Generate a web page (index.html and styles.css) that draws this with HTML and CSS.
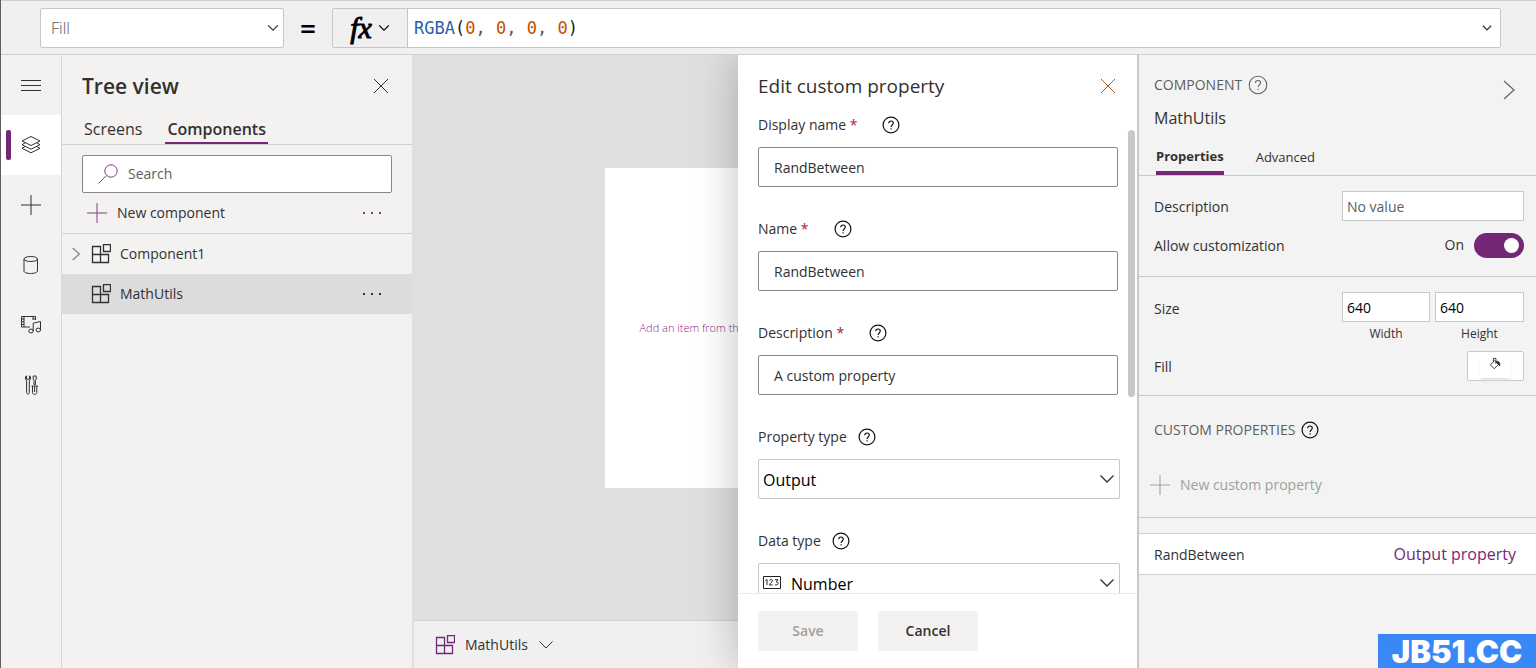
FILE: index.html
```html
<!DOCTYPE html>
<html lang="en">
<head>
<meta charset="utf-8">
<title>Component editor</title>
<link rel="stylesheet" href="styles.css">
</head>
<body>
<svg class="defs" aria-hidden="true">
  <symbol id="chevron" viewBox="0 0 16 16"><path d="M1.500 4.500 8 11l6.500-6.500"/></symbol>
  <symbol id="chevron-right" viewBox="0 0 12 20"><path d="M1 1l10 9-10 9"/></symbol>
  <symbol id="close" viewBox="0 0 16 16"><path d="M1 1l14 14M15 1 1 15"/></symbol>
  <symbol id="plus" viewBox="0 0 20 20"><path d="M10 0v20M0 10h20"/></symbol>
  <symbol id="help" viewBox="0 0 18 18"><circle cx="9" cy="9" r="7.900"/><path d="M6.700 7.200C6.700 5.800 7.600 5 9 5s2.300.8 2.300 2.100c0 1.700-2.200 2-2.200 3.800M9.100 12.300v1.300"/></symbol>
  <symbol id="dots" viewBox="0 0 20 4"><path d="M1 1h2v2H1zM9 1h2v2H9zM17 1h2v2h-2z"/></symbol>
  <symbol id="component" viewBox="0 0 20 20"><path d="M1.500 2.500h8v8h-8zM1.500 10.500h8v8h-8zM9.500 10.500h8v8h-8zM12.500.5h7v7h-7z"/></symbol>
</svg>

<header class="formula-bar">
  <div class="select-wrap property-select">
    <select aria-label="Property"><option>Fill</option></select>
    <svg class="icon chevron"><use href="#chevron"/></svg>
  </div>
  <span class="equals">=</span>
  <div class="formula">
    <button class="fx" aria-label="Functions"><i>fx</i><svg class="icon chevron"><use href="#chevron"/></svg></button>
    <div class="code" role="textbox" aria-label="Formula"><code><span class="fn">RGBA</span>(<span class="num">0</span><span class="sep">,</span> <span class="num">0</span><span class="sep">,</span> <span class="num">0</span><span class="sep">,</span> <span class="num">0</span>)</code>
      <svg class="icon chevron small"><use href="#chevron"/></svg>
    </div>
  </div>
</header>

<div class="workspace">
  <nav class="rail" aria-label="Tools">
    <button aria-label="Menu"><svg class="icon s20 crisp" viewBox="0 0 20 20"><path d="M0 5.500h20M0 10.500h20M0 15.500h20"/></svg></button>
    <button class="active" aria-label="Tree view"><svg class="icon s20" viewBox="0 0 20 20"><path d="M10 1.500 1 6l9 4.500L19 6zM4.300 7.800 1 9.700l9 4.500 9-4.500-3.300-1.900M4.300 11.500 1 13.300l9 4.500 9-4.500-3.300-1.800"/></svg></button>
    <button aria-label="Insert"><svg class="icon s20"><use href="#plus"/></svg></button>
    <button aria-label="Data"><svg class="icon s20" viewBox="0 0 20 20"><path d="M3 4v12c0 1.500 3 2.500 6.500 2.500s7-1 7-2.500V4"/><ellipse cx="9.750" cy="4" rx="6.750" ry="2.500"/></svg></button>
    <button aria-label="Media"><svg class="icon s20" viewBox="0 0 20 20"><path d="M9 12H.5V1.500H14.500V5M3 1.500v10.500M12 1.500V5M.5 4H3M.5 6.700H3M.5 9.400H3M12 4h2.500M12.200 16V8.200L19.500 6.500v8.500"/><ellipse cx="10" cy="16" rx="2.200" ry="1.900"/><ellipse cx="17.300" cy="15" rx="2.200" ry="1.900"/></svg></button>
    <button aria-label="Advanced tools"><svg class="icon s20" viewBox="0 0 20 20"><path d="M5.500.8v3.400h3V.8c1.400.7 1.600 3.700-.2 5V17.500c0 2-2.700 2-2.700 0V5.800C3.900 4.500 4.100 1.500 5.500.8zM12.200 1h3v3l-.8 1.500v4h-1.400v-4L12.200 4zM10.500 11h6.500M11.500 11v6.500c0 2.500 4.300 2.500 4.300 0V11M13.600 11v6"/></svg></button>
  </nav>

  <aside class="tree">
    <div class="tree-head">
      <h1>Tree view</h1>
      <button class="plain" aria-label="Close"><svg class="icon s16"><use href="#close"/></svg></button>
    </div>
    <div class="tree-tabs"><button>Screens</button><button class="selected">Components</button></div>
    <label class="search">
      <svg class="icon s20 purple" viewBox="0 0 20 20"><circle cx="13" cy="7" r="6.200"/><path d="M8.500 11.500.5 19.500"/></svg>
      <input type="search" placeholder="Search" aria-label="Search">
    </label>
    <div class="new-row">
      <button class="plain new-component"><svg class="icon s20 purple"><use href="#plus"/></svg>New component</button>
      <button class="plain" aria-label="More"><svg class="dots purple"><use href="#dots"/></svg></button>
    </div>
    <ul class="items">
      <li><svg class="icon expander"><use href="#chevron-right"/></svg><svg class="icon s20 component"><use href="#component"/></svg><span>Component1</span></li>
      <li class="current"><svg class="icon s20 component"><use href="#component"/></svg><span>MathUtils</span><button class="plain" aria-label="More"><svg class="dots"><use href="#dots"/></svg></button></li>
    </ul>
  </aside>

  <main class="stage">
    <div class="canvas"><div class="artboard">Add an item from th</div></div>
    <div class="breadcrumb"><svg class="icon s20 component dark"><use href="#component"/></svg><span>MathUtils</span><svg class="icon chevron"><use href="#chevron"/></svg></div>

    <section class="editor" aria-labelledby="editor-title">
      <div class="editor-head">
        <h2 id="editor-title">Edit custom property</h2>
        <button class="plain close" aria-label="Close"><svg class="icon s16"><use href="#close"/></svg></button>
      </div>
      <form class="fields">
        <div class="field"><div class="label"><label for="display">Display name <b>*</b></label><button type="button" class="plain" aria-label="Help"><svg class="icon help"><use href="#help"/></svg></button></div>
          <input id="display" type="text" value="RandBetween"></div>
        <div class="field"><div class="label"><label for="name">Name <b>*</b></label><button type="button" class="plain" aria-label="Help"><svg class="icon help"><use href="#help"/></svg></button></div>
          <input id="name" type="text" value="RandBetween"></div>
        <div class="field"><div class="label"><label for="desc">Description <b>*</b></label><button type="button" class="plain" aria-label="Help"><svg class="icon help"><use href="#help"/></svg></button></div>
          <input id="desc" type="text" value="A custom property"></div>
        <div class="field wide"><div class="label near"><label for="ptype">Property type</label><button type="button" class="plain" aria-label="Help"><svg class="icon help"><use href="#help"/></svg></button></div>
          <div class="select-wrap"><select id="ptype"><option>Output</option></select><svg class="icon chevron"><use href="#chevron"/></svg></div></div>
        <div class="field wide"><div class="label near"><label for="dtype">Data type</label><button type="button" class="plain" aria-label="Help"><svg class="icon help"><use href="#help"/></svg></button></div>
          <div class="select-wrap typed"><svg class="type-icon" viewBox="0 0 18 13" aria-hidden="true"><path class="frame" d="M.5.5h17v12H.5z"/><path d="M2.500 4.500 4 3.500v5.500M6.500 4.500c.5-1.300 3-1.300 3 .3 0 1.200-3 2.500-3 4.200h3.200M12 3.700h3L13.300 6c2.700 0 2.200 3-.1 3-.7 0-1.200-.2-1.400-.6"/></svg><select id="dtype"><option>Number</option></select><svg class="icon chevron"><use href="#chevron"/></svg></div></div>
      </form>
      <div class="thumb"></div>
      <div class="editor-foot"><button disabled>Save</button><button>Cancel</button></div>
    </section>
  </main>

  <aside class="props">
    <div class="props-head">
      <div>
        <div class="kind">COMPONENT<button class="plain" aria-label="Help"><svg class="icon help large"><use href="#help"/></svg></button></div>
        <div class="component-name">MathUtils</div>
      </div>
      <button class="plain collapse" aria-label="Collapse"><svg class="icon"><use href="#chevron-right"/></svg></button>
    </div>
    <div class="props-tabs"><button class="selected">Properties</button><button>Advanced</button></div>
    <div class="group">
      <div class="row"><label for="pdesc">Description</label><input id="pdesc" type="text" placeholder="No value"></div>
      <div class="row toggle-row"><label for="allow">Allow customization</label><span class="toggle"><span>On</span><input id="allow" type="checkbox" role="switch" checked></span></div>
    </div>
    <div class="group size-group">
      <div class="row size"><span>Size</span>
        <div class="pair">
          <div><input id="w" type="text" value="640"><label for="w">Width</label></div>
          <div><input id="h" type="text" value="640"><label for="h">Height</label></div>
        </div>
      </div>
      <div class="row"><span>Fill</span><button class="swatch" aria-label="Fill colour"><svg class="icon" viewBox="0 0 14 14"><path d="M6 3 1 8l4.500 4.500L11 7zM4.500 4.500v-4h3V7"/><path class="solid" d="M8 4c3 0 4.500 1.500 4 5-1-1.500-1.500-2-2-2z"/></svg></button></div>
    </div>
    <div class="custom">
      <div class="custom-title">CUSTOM PROPERTIES<button class="plain" aria-label="Help"><svg class="icon help"><use href="#help"/></svg></button></div>
      <button class="plain new-custom" disabled><svg class="icon s20"><use href="#plus"/></svg>New custom property</button>
    </div>
    <div class="property"><span>RandBetween</span><a href="#output">Output property</a></div>
    <div class="watermark">JB51.CC</div>
  </aside>
</div>
</body>
</html>
```
FILE: styles.css
```css
* { box-sizing: border-box; }
body {
  margin: 0;
  height: 100vh;
  display: flex;
  flex-direction: column;
  overflow: hidden;
  border-left: 1px solid #605e5c;
  background: #f3f2f1;
  color: #323130;
  font: 14px/20px "Open Sans", "Noto Sans", sans-serif;
}
button, input, select { font: inherit; color: inherit; margin: 0; }
button { cursor: pointer; }
h1, h2, ul { margin: 0; padding: 0; }
.defs { position: absolute; width: 0; height: 0; }
.icon { flex: none; display: block; fill: none; stroke: currentColor; stroke-width: 1; overflow: visible; }
.s16 { width: 16px; height: 16px; }
.s20 { width: 20px; height: 20px; }
.component { stroke-width: 1.300; }
.chevron { width: 16px; height: 16px; }
.help { width: 18px; height: 18px; stroke: #111; stroke-width: 1.200; }
.dots { width: 20px; height: 4px; display: block; fill: currentColor; }
.purple { color: #8a3a8a; }
.dark { color: #742774; }
.plain { display: flex; align-items: center; border: 0; padding: 0; background: none; }
.select-wrap { position: relative; display: flex; }
.select-wrap select { appearance: none; width: 100%; height: 40px; border: 1px solid #c8c6c4; border-radius: 2px; background: #fff; }
.select-wrap .chevron { position: absolute; right: 5px; top: 12px; pointer-events: none; stroke-width: 1.300; }

/* Formula bar */
.formula-bar {
  flex: none;
  height: 55px;
  display: flex;
  align-items: center;
  padding: 0 35px 0 39px;
  border-top: 1px solid #d0d0d0;
  border-bottom: 1px solid #d0d0d0;
  background: #f0f0f0;
}
.property-select { width: 244px; padding-top: 1px; }
.property-select select { padding: 0 10px; color: #555; font-size: 16px; font-weight: 300; }
.select-wrap.property-select .chevron { width: 12px; height: 12px; top: 15px; stroke-width: 1.500; }
.equals { width: 48px; text-align: center; font-size: 28px; font-weight: 600; color: #000; }
.formula { flex: 1; display: flex; height: 40px; border: 1px solid #c8c6c4; border-radius: 2px; }
.fx { width: 75px; display: flex; align-items: center; justify-content: center; gap: 6px; border: 0; border-right: 1px solid #c8c6c4; background: #f0f0f0; color: #000; }
.fx i { font: italic 400 30px/30px "Liberation Serif", serif; -webkit-text-stroke: 1px #000; }
.fx .chevron { width: 12px; height: 12px; stroke-width: 1.500; }
.code { flex: 1; display: flex; align-items: center; justify-content: space-between; padding: 0 8px 0 6px; background: #fff; }
.code code { font: 17px/24px "DejaVu Sans Mono", monospace; color: #222; }
.fn { color: #2b5fa8; }
.num { color: #c25100; }
.sep { color: #556; }
.chevron.small { width: 10px; height: 10px; stroke-width: 2; }

.workspace { flex: 1; min-height: 0; display: flex; }

/* Icon rail */
.rail { flex: none; width: 61px; display: flex; flex-direction: column; border-right: 1px solid #d6d6d6; }
.rail button { position: relative; height: 60px; display: grid; place-items: center; border: 0; border-radius: 2px; background: none; }
.rail .active { background: #fff; }
.rail .active::before { content: ""; position: absolute; left: 5px; top: 15px; width: 5px; height: 30px; border-radius: 2px; background: #742774; }

/* Tree */
.tree { flex: none; width: 352px; border-right: 2px solid #e1dfdd; }
.tree-head { display: flex; align-items: center; justify-content: space-between; height: 60px; padding: 1px 23px 0 20px; }
.tree-head h1 { font-size: 21px; line-height: 28px; font-weight: 600; }
.tree-tabs { display: flex; gap: 21px; height: 30px; padding: 0 20px; border-bottom: 1px solid #d0d0d0; }
.tree-tabs button { height: 29px; padding: 0 2px 1px; border: 0; background: none; font-size: 16px; }
.tree-tabs .selected { padding-bottom: 0; border-bottom: 2px solid #742774; font-weight: 600; }
.search { display: flex; align-items: center; gap: 10px; height: 38px; margin: 10px 20px 2px; padding: 0 15px; border: 1px solid #8a8886; border-radius: 2px; background: #fff; }
.search input { flex: 1; min-width: 0; border: 0; padding: 0; background: none; outline: 0; }
.search input::placeholder { color: #605e5c; opacity: 1; }
.new-row { display: flex; align-items: center; justify-content: space-between; height: 39px; padding: 0 30px 3px 25px; border-bottom: 1px solid #d0d0d0; }
.new-component { gap: 10px; }
.items { list-style: none; }
.items li { display: flex; align-items: center; height: 40px; gap: 9px; padding: 0 30px 0 10px; }
.items .expander { width: 8px; height: 14px; margin-right: 2px; stroke-width: 2; color: #888; }
.items .current { padding-left: 29px; background: #dcdcdc; }
.items .current button { margin-left: auto; }

/* Canvas */
.stage { position: relative; flex: 1; min-width: 0; display: flex; flex-direction: column; overflow: hidden; }
.canvas { flex: 1; display: flex; align-items: center; justify-content: center; padding: 0 22px 20px 0; background: #dfdfdf; }
.artboard { flex: none; width: 320px; height: 320px; display: flex; align-items: center; background: #fff; color: #8a2a8a; font-size: 11px; font-weight: 300; padding-left: 35px; white-space: nowrap; }
.breadcrumb { flex: none; height: 48px; display: flex; align-items: center; gap: 10px; padding: 0 21px; border-top: 1px solid #d0d0d0; background: #f0f0f0; }

/* Property editor */
.editor { position: absolute; inset: 0 0 0 auto; width: 399px; display: flex; flex-direction: column; background: #fff; box-shadow: 0 0 40px rgba(0, 0, 0, .25); }
.editor-head { flex: none; display: flex; align-items: center; justify-content: space-between; height: 60px; padding: 2px 21px 0 20px; }
.editor-head h2 { font-size: 19px; line-height: 26px; font-weight: 400; }
.close { color: #b0561c; }
.fields { flex: 1; min-height: 0; overflow: hidden; padding: 0 17px 0 20px; }
.field { display: flex; flex-direction: column; gap: 12px; margin-bottom: 32px; padding-right: 2px; }
.field.wide { padding-right: 0; }
.label { display: flex; align-items: center; gap: 25px; height: 20px; }
.label.near { gap: 11px; }
.label b { color: #a4262c; font-weight: 400; }
.field input { height: 40px; padding: 0 15px; border: 1px solid #8a8886; border-radius: 2px; background: #fff; }
.fields select { padding: 2px 4px 0; font-size: 16px; color: #000; }
.fields .typed select { padding-left: 32px; }
.type-icon { position: absolute; left: 5px; top: 13px; width: 18px; height: 13px; fill: none; stroke: #222; }
.thumb { position: absolute; right: 2px; top: 75px; width: 7px; height: 267px; border-radius: 4px; background: #c8c8c8; }
.editor-foot { flex: none; display: flex; gap: 20px; padding: 17px 20px; border-top: 1px solid #edebe9; }
.editor-foot button { width: 100px; height: 40px; border: 0; border-radius: 2px; background: #f3f2f1; font-weight: 600; }
.editor-foot button:disabled { color: #a19f9d; }

/* Properties */
.props { position: relative; flex: none; width: 399px; border-left: 2px solid #c8c8c8; background: #f3f3f3; }
.props-head { display: flex; justify-content: space-between; height: 85px; padding: 18px 21px 0 15px; }
.kind { display: flex; align-items: center; gap: 6px; height: 24px; color: #605e5c; }
.help.large { width: 20px; height: 20px; stroke: #666; stroke-width: 1; }
.component-name { margin-top: 9px; font-size: 16px; line-height: 24px; }
.collapse { height: 34px; color: #666; }
.collapse svg { width: 12px; height: 20px; stroke-width: 1.300; }
.props-tabs { display: flex; gap: 32px; height: 36px; padding: 0 17px; border-bottom: 1px solid #c8c8c8; }
.props-tabs button { height: 35px; padding: 0 0 2px; border: 0; background: none; font-size: 13px; }
.props-tabs .selected { padding-bottom: 0; border-bottom: 4px solid #742774; font-weight: 700; }
.group { padding: 15px 12px 15px 15px; border-bottom: 1px solid #c8c8c8; }
.row { display: flex; align-items: center; justify-content: space-between; height: 30px; }
.row > label, .row > span:first-child { padding-top: 2px; }
.row input[type="text"] { height: 30px; padding: 0 4px; border: 1px solid #c8c8c8; background: #fff; width: 182px; }
.row input::placeholder { color: #605e5c; opacity: 1; }
.toggle-row { margin-top: 9px; }
.toggle { display: flex; align-items: center; gap: 10px; }
.toggle input { appearance: none; width: 50px; height: 25px; border-radius: 13px; background: #742774; position: relative; }
.toggle input::after { content: ""; position: absolute; right: 5px; top: 5px; width: 15px; height: 15px; border-radius: 50%; background: #fff; }
.group:has(.toggle-row) { padding-bottom: 16px; }
.size-group { padding-bottom: 14px; }
.row.size { height: auto; align-items: flex-start; margin-bottom: 7px; }
.row.size > span { line-height: 30px; }
.pair { display: grid; grid-template-columns: 88px 89px; gap: 5px; }
.row .pair input { width: 100%; color: #000; }
.pair label { display: block; margin-top: 2px; text-align: center; font-size: 12px; }
.swatch { width: 57px; height: 30px; display: grid; place-items: center; border: 1px solid #c8c8c8; border-radius: 2px; background: #fff; }
.swatch svg { width: 31px; height: 24px; padding: 4px 8px 8px; color: #222; box-shadow: 0 3px 3px -1px #ddd; }
.swatch .solid { fill: #111; }
.custom { padding: 24px 11px 15px; border-bottom: 1px solid #c8c8c8; }
.custom-title { display: flex; align-items: center; gap: 6px; height: 20px; padding-left: 4px; color: #605e5c; }
.new-custom { gap: 10px; height: 34px; margin-top: 28px; color: #a19f9d; }
.property { display: flex; align-items: center; justify-content: space-between; height: 42px; margin-top: 15px; padding: 0 20px 0 15px; border-top: 1px solid #d0d0d0; border-bottom: 1px solid #d0d0d0; background: #fff; }
.property span { padding-top: 2px; }
.property a { color: #742774; font-size: 16px; text-decoration: none; }
.watermark { position: absolute; right: 0; bottom: 0; width: 158px; height: 34px; background: #3a87f7; color: #fff; text-align: center; font: 900 31px/36px "Inter", sans-serif; }
```
